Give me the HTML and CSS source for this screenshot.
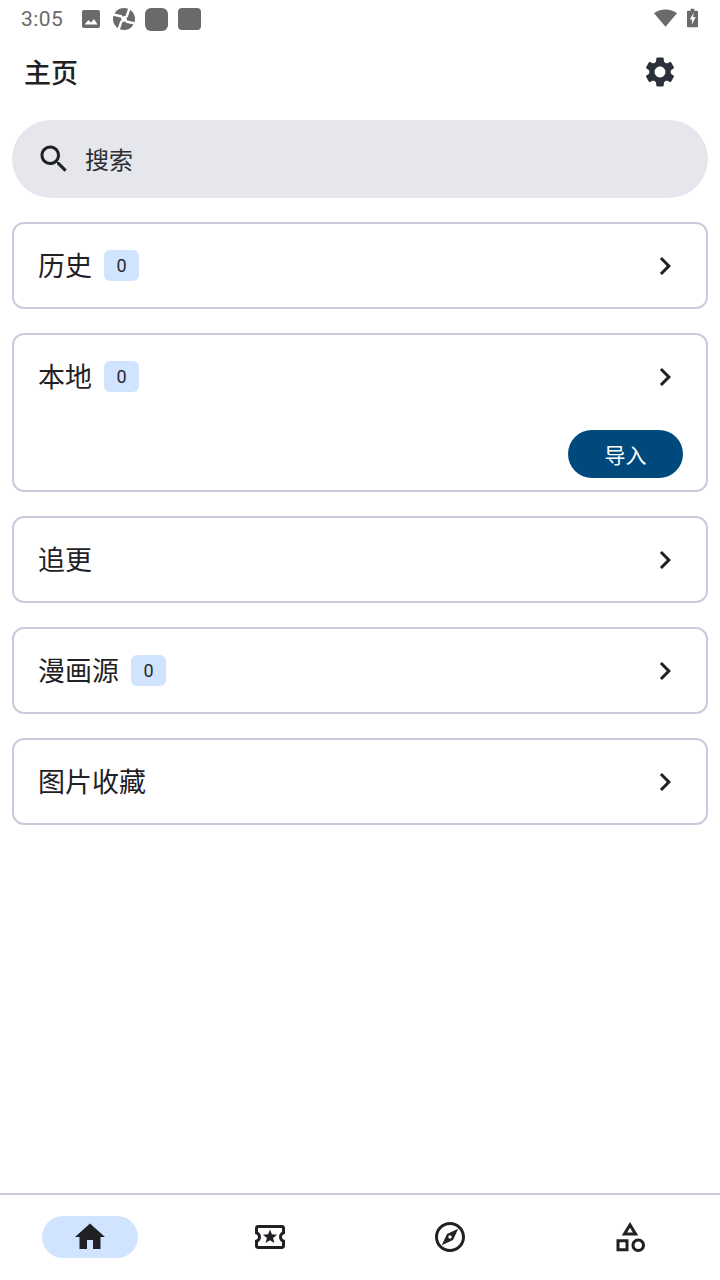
FILE: index.html
```html
<!doctype html>
<html lang="zh-CN">
	<head>
		<meta charset="utf-8">
		<title>主页</title>
		<link rel="stylesheet" href="styles.css">
	</head>
	<body>
		<div class="statusbar">
			<span class="clock">3:05</span>
			<svg class="st-icon st-image" viewBox="0 0 18 18"><rect width="18" height="18" rx="2" fill="#6a6a6a"/><path d="M2.500 14.500l4-4.500 2.500 2.500 3-3.500 3.500 5.500z" fill="#fff"/></svg>
			<svg class="st-icon st-app" viewBox="0 0 22 22"><circle cx="11" cy="11" r="11" fill="#6a6a6a"/><path d="M0 6.500L9 8.500M16.500 0L13.500 9M22 15.500L13 13.500M5.500 22L8.500 13" fill="none" stroke="#fff" stroke-width="2.400"/><path d="M8 8.500L13.500 8 14 13.500 8.500 14z" fill="#fff"/></svg>
			<span class="st-square st-square-a"></span>
			<span class="st-square st-square-b"></span>
			<span class="st-spacer"></span>
			<svg class="st-wifi" viewBox="0 0 24 18"><path d="M12 18L0 4C3 1.500 7 0 12 0s9 1.500 12 4z" fill="#6a6a6a"/></svg>
			<svg class="st-batt" viewBox="0 0 12 20"><path d="M4 0h4v2h3a1 1 0 0 1 1 1v16a1 1 0 0 1-1 1H1a1 1 0 0 1-1-1V3a1 1 0 0 1 1-1h3z" fill="#6a6a6a"/><path d="M7.500 4L3 11.500H5.500V17L9.500 9H6.500z" fill="#fff"/></svg>
		</div>

		<div class="appbar">
			<h1>主页</h1>
			<svg class="icon gear" viewBox="0 0 24 24"><path d="M19.140 12.940c.04-.3.06-.61.06-.94 0-.32-.02-.64-.07-.94l2.030-1.580c.18-.14.23-.41.12-.61l-1.920-3.320c-.12-.22-.37-.29-.59-.22l-2.390.96c-.5-.38-1.030-.7-1.620-.94l-.36-2.540c-.04-.24-.24-.41-.48-.41h-3.840c-.24 0-.43.17-.47.41l-.36 2.540c-.59.24-1.130.57-1.620.94l-2.390-.96c-.22-.08-.47 0-.59.22L2.740 8.870c-.12.21-.08.47.12.61l2.030 1.580c-.05.3-.09.63-.09.94s.02.64.07.94l-2.030 1.580c-.18.14-.23.41-.12.61l1.920 3.320c.12.22.37.29.59.22l2.390-.96c.5.38 1.030.7 1.620.94l.36 2.540c.05.24.24.41.48.41h3.840c.24 0 .44-.17.47-.41l.36-2.540c.59-.24 1.130-.56 1.620-.94l2.390.96c.22.08.47 0 .59-.22l1.920-3.320c.12-.22.07-.47-.12-.61l-2.010-1.580zM12 15.600c-1.980 0-3.600-1.620-3.600-3.600s1.620-3.600 3.600-3.600 3.600 1.620 3.600 3.600-1.620 3.600-3.600 3.600z"/></svg>
		</div>

		<div class="content">
			<div class="search">
				<svg class="icon" viewBox="0 0 24 24"><path d="M15.500 14h-.79l-.28-.27C15.410 12.590 16 11.110 16 9.500 16 5.910 13.090 3 9.500 3S3 5.910 3 9.500 5.910 16 9.500 16c1.610 0 3.090-.59 4.230-1.570l.27.28v.79l5 4.990L20.490 19l-4.990-5zm-6 0C7.010 14 5 11.990 5 9.500S7.010 5 9.500 5 14 7.010 14 9.500 11.990 14 9.500 14z"/></svg>
				<span class="search-text">搜索</span>
			</div>

			<div class="card">
				<div class="card-row">
					<span class="card-title">历史</span>
					<span class="badge">0</span>
					<svg class="icon chevron" viewBox="0 0 24 24"><path d="M10 6L8.590 7.410 13.170 12l-4.580 4.590L10 18l6-6z"/></svg>
				</div>
			</div>

			<div class="card">
				<div class="card-row">
					<span class="card-title">本地</span>
					<span class="badge">0</span>
					<svg class="icon chevron" viewBox="0 0 24 24"><path d="M10 6L8.590 7.410 13.170 12l-4.580 4.590L10 18l6-6z"/></svg>
				</div>
				<div class="card-actions">
					<button class="btn">导入</button>
				</div>
			</div>

			<div class="card">
				<div class="card-row">
					<span class="card-title">追更</span>
					<svg class="icon chevron" viewBox="0 0 24 24"><path d="M10 6L8.590 7.410 13.170 12l-4.580 4.590L10 18l6-6z"/></svg>
				</div>
			</div>

			<div class="card">
				<div class="card-row">
					<span class="card-title">漫画源</span>
					<span class="badge">0</span>
					<svg class="icon chevron" viewBox="0 0 24 24"><path d="M10 6L8.590 7.410 13.170 12l-4.580 4.590L10 18l6-6z"/></svg>
				</div>
			</div>

			<div class="card">
				<div class="card-row">
					<span class="card-title">图片收藏</span>
					<svg class="icon chevron" viewBox="0 0 24 24"><path d="M10 6L8.590 7.410 13.170 12l-4.580 4.590L10 18l6-6z"/></svg>
				</div>
			</div>
		</div>

		<div class="navbar">
			<div class="nav-item">
				<div class="nav-pill active">
					<svg class="icon" viewBox="0 0 24 24"><path d="M10 20v-6h4v6h5v-8h3L12 3 2 12h3v8z"/></svg>
				</div>
			</div>
			<div class="nav-item">
				<div class="nav-pill">
					<svg class="icon" viewBox="0 0 24 24"><path d="M22 10V6c0-1.110-.9-2-2-2H4c-1.100 0-1.990.89-1.990 2v4c1.100 0 1.990.9 1.990 2s-.89 2-2 2v4c0 1.100.9 2 2 2h16c1.100 0 2-.9 2-2v-4c-1.100 0-2-.9-2-2s.9-2 2-2zm-2-1.460c-1.190.69-2 1.990-2 3.460s.81 2.770 2 3.460V18H4v-2.540c1.190-.69 2-1.990 2-3.460 0-1.480-.8-2.770-1.990-3.460L4 6h16v2.540zM9.070 16L12 14.120 14.930 16l-.89-3.360 2.690-2.200-3.470-.21L12 7l-1.270 3.220-3.470.2 2.690 2.200z"/></svg>
				</div>
			</div>
			<div class="nav-item">
				<div class="nav-pill">
					<svg class="icon" viewBox="0 0 24 24"><path d="M12 2C6.480 2 2 6.480 2 12s4.480 10 10 10 10-4.480 10-10S17.520 2 12 2zm0 18c-4.410 0-8-3.590-8-8s3.590-8 8-8 8 3.590 8 8-3.590 8-8 8zm-5.500-2.500l7.510-3.490L17.500 6.500 9.990 9.990 6.500 17.500zm5.500-6.600c.61 0 1.100.49 1.100 1.100s-.49 1.100-1.100 1.100-1.100-.49-1.100-1.100.49-1.100 1.100-1.100z"/></svg>
				</div>
			</div>
			<div class="nav-item">
				<div class="nav-pill">
					<svg class="icon" viewBox="0 0 24 24"><path d="M12 2l-5.500 9h11L12 2zm0 3.840L13.930 9h-3.870L12 5.840zM17.500 13c-2.490 0-4.500 2.010-4.500 4.500s2.010 4.500 4.500 4.500 4.500-2.010 4.500-4.500-2.010-4.500-4.500-4.500zm0 7c-1.380 0-2.500-1.120-2.500-2.500s1.120-2.500 2.500-2.500 2.500 1.120 2.500 2.500-1.120 2.500-2.500 2.500zM3 21.500h8v-8H3v8zm2-6h4v4H5v-4z"/></svg>
				</div>
			</div>
		</div>
	</body>
</html>
```

FILE: styles.css
```css
html, body
{
	height: 100%;
}

body
{
	margin: 0;
	display: flex;
	flex-direction: column;
	height: 1280px;
	overflow: hidden;
	color: #1f2124;
	background-color: #fff;
	font-family: "Noto Sans CJK SC", "Noto Sans", sans-serif;
}

.icon
{
	display: block;
	width: 36px;
	height: 36px;
	flex: none;
	fill: #1f2124;
}

/* status bar */
.statusbar
{
	display: flex;
	align-items: center;
	height: 38px;
	padding: 0 22px 0 21px;
	box-sizing: border-box;
}

.clock
{
	font-family: Roboto, sans-serif;
	font-size: 21px;
	color: #6a6a6a;
	letter-spacing: 0.4px;
	width: 61px;
}

.st-icon
{
	flex: none;
	display: block;
}

.st-image
{
	width: 18px;
	height: 18px;
}

.st-app
{
	width: 22px;
	height: 22px;
	margin-left: 13px;
}

.st-square
{
	display: block;
	background-color: #6a6a6a;
}

.st-square-a
{
	width: 23px;
	height: 23px;
	border-radius: 6px;
	margin-left: 10px;
}

.st-square-b
{
	width: 23px;
	height: 22px;
	border-radius: 4px;
	margin-left: 10px;
}

.st-spacer
{
	flex: 1;
}

.st-wifi
{
	display: block;
	width: 23px;
	height: 18px;
	margin-bottom: 2px;
}

.st-batt
{
	display: block;
	width: 11px;
	height: 20px;
	margin-left: 10px;
	margin-bottom: 2px;
}

/* top bar */
.appbar
{
	display: flex;
	align-items: center;
	justify-content: space-between;
	height: 68px;
	padding: 0 42px 0 24px;
}

.appbar h1
{
	margin: 0;
	font-size: 27px;
	font-weight: 500;
	line-height: 38px;
}

.gear
{
	fill: #2a313b;
}

/* list */
.content
{
	flex: 1;
	display: flex;
	flex-direction: column;
	gap: 24px;
	padding: 14px 12px 0;
}

.search
{
	display: flex;
	align-items: center;
	gap: 13px;
	height: 78px;
	padding: 0 24px;
	border-radius: 39px;
	background-color: #e5e7ec;
	font-size: 24px;
	color: #2b2e32;
}

.search-text
{
	padding-bottom: 2px;
}

.card
{
	border: 2px solid #c8ccdc;
	border-radius: 12px;
	padding: 0 23px 0 24px;
}

.card-row
{
	display: flex;
	align-items: center;
	height: 83px;
}

.card-title
{
	font-size: 27px;
	line-height: 38px;
	padding-bottom: 2px;
}

.badge
{
	width: 35px;
	height: 31px;
	margin-left: 12px;
	border-radius: 6px;
	background-color: #d1e4ff;
	font-family: Roboto, sans-serif;
	font-size: 18px;
	line-height: 31px;
	text-align: center;
	color: #26282b;
}

.chevron
{
	margin-left: auto;
}

.card-actions
{
	display: flex;
	justify-content: flex-end;
	margin-top: 12px;
	padding-bottom: 12px;
}

.btn
{
	width: 115px;
	height: 48px;
	border: 0;
	padding: 0;
	border-radius: 24px;
	background-color: #00497d;
	color: #fff;
	font-family: inherit;
	font-size: 21px;
}

/* bottom nav */
.navbar
{
	display: flex;
	height: 87px;
	border-top: 2px solid #c8ccdc;
	box-sizing: border-box;
}

.nav-item
{
	flex: 1;
	display: flex;
	justify-content: center;
	padding-top: 21px;
}

.nav-pill
{
	display: flex;
	align-items: center;
	justify-content: center;
	width: 96px;
	height: 42px;
	border-radius: 21px;
}

.nav-pill.active
{
	background-color: #d1e4ff;
}
```
